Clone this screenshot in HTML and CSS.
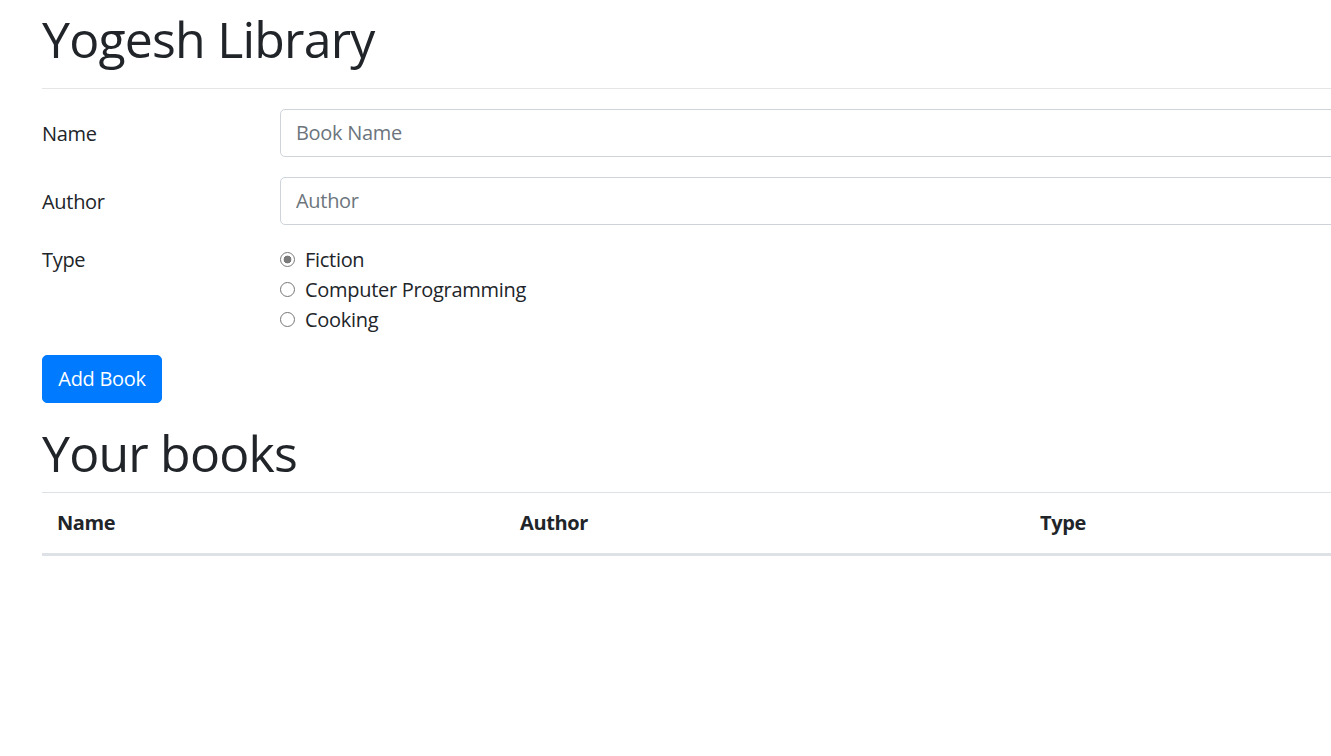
FILE: index.html
```html
<!DOCTYPE html>
<html lang="en">
<head>
<meta charset="utf-8">
<title>Yogesh Library</title>
<link rel="stylesheet" href="styles.css">
</head>
<body>
<div class="container">
  <h1 class="title">Yogesh Library</h1>
  <hr class="divider">
  <form class="book-form">
    <div class="form-row">
      <label class="form-label" for="bookName">Name</label>
      <div class="form-field"><input class="form-input" id="bookName" type="text" placeholder="Book Name"></div>
    </div>
    <div class="form-row">
      <label class="form-label" for="author">Author</label>
      <div class="form-field"><input class="form-input" id="author" type="text" placeholder="Author"></div>
    </div>
    <div class="form-row">
      <div class="form-label legend">Type</div>
      <div class="form-field">
        <label class="radio-line"><input class="radio" type="radio" name="type" checked><span>Fiction</span></label>
        <label class="radio-line"><input class="radio" type="radio" name="type"><span>Computer Programming</span></label>
        <label class="radio-line"><input class="radio" type="radio" name="type"><span>Cooking</span></label>
      </div>
    </div>
    <div class="btn-row">
      <button type="button" class="btn-primary">Add Book</button>
    </div>
  </form>
  <h1 class="title">Your books</h1>
  <table class="books">
    <thead>
      <tr>
        <th class="col-name">Name</th>
        <th class="col-author">Author</th>
        <th class="col-type">Type</th>
      </tr>
    </thead>
    <tbody></tbody>
  </table>
</div>
</body>
</html>
```
FILE: styles.css
```css
html, body {
  margin: 0;
  padding: 0;
  background: #fff;
  overflow: hidden;
}
body {
  font-family: "Open Sans", "Noto Sans", sans-serif;
  font-size: 20px;
  line-height: 30px;
  color: #212529;
}
.container {
  margin-left: 42px;
  width: 1398px;
  padding-top: 9px;
}
.title {
  font-size: 50px;
  font-weight: 500;
  line-height: 60px;
  margin: 0 0 10px 0;
  letter-spacing: -0.8px;
}
.divider {
  border: 0;
  border-top: 1px solid rgba(0,0,0,.1);
  margin: 19px 0 20px 0;
}
.book-form {
  margin: 0;
}
.form-row {
  display: grid;
  grid-template-columns: 238px 1fr;
  margin-bottom: 20px;
}
.form-label {
  padding-top: 10px;
  padding-bottom: 8px;
  letter-spacing: -0.3px;
}
.form-label.legend {
  padding-top: 0;
}
.form-input {
  display: block;
  box-sizing: border-box;
  width: 100%;
  height: 47.5px;
  padding: 7.5px 15px;
  font-family: inherit;
  font-size: 20px;
  color: #495057;
  border: 1.25px solid #ced4da;
  border-radius: 5px;
  background: #fff;
  outline: none;
  letter-spacing: -0.3px;
}
.form-input::placeholder {
  color: #6c757d;
  opacity: 1;
}
.radio-line {
  display: flex;
  align-items: flex-start;
  height: 30px;
  letter-spacing: -0.3px;
}
.radio {
  appearance: none;
  -webkit-appearance: none;
  box-sizing: border-box;
  width: 15px;
  height: 15px;
  margin: 7px 10px 0 0;
  border: 1.25px solid #767676;
  border-radius: 50%;
  background: #fff;
  flex: none;
}
.radio:checked {
  border-color: #7a7a7a;
  background: radial-gradient(circle, #7a7a7a 0 3.6px, #fff 4.2px);
}
.btn-row {
  margin-bottom: 20px;
}
.btn-primary {
  display: block;
  box-sizing: border-box;
  width: 120px;
  height: 47.5px;
  padding: 7.5px 15px;
  font-family: inherit;
  font-size: 20px;
  line-height: 30px;
  color: #fff;
  background: #007bff;
  border: 1.25px solid #007bff;
  border-radius: 5px;
  letter-spacing: -0.3px;
}
.books {
  width: 100%;
  border-collapse: collapse;
  margin-top: -1px;
}
.books th {
  text-align: left;
  font-weight: 700;
  padding: 15px;
  line-height: 30px;
  border-top: 1px solid #dee2e6;
  border-bottom: 3px solid #dee2e6;
  letter-spacing: -0.4px;
}
.col-name { width: 463px; box-sizing: border-box; }
.col-author { width: 520px; box-sizing: border-box; }
```
